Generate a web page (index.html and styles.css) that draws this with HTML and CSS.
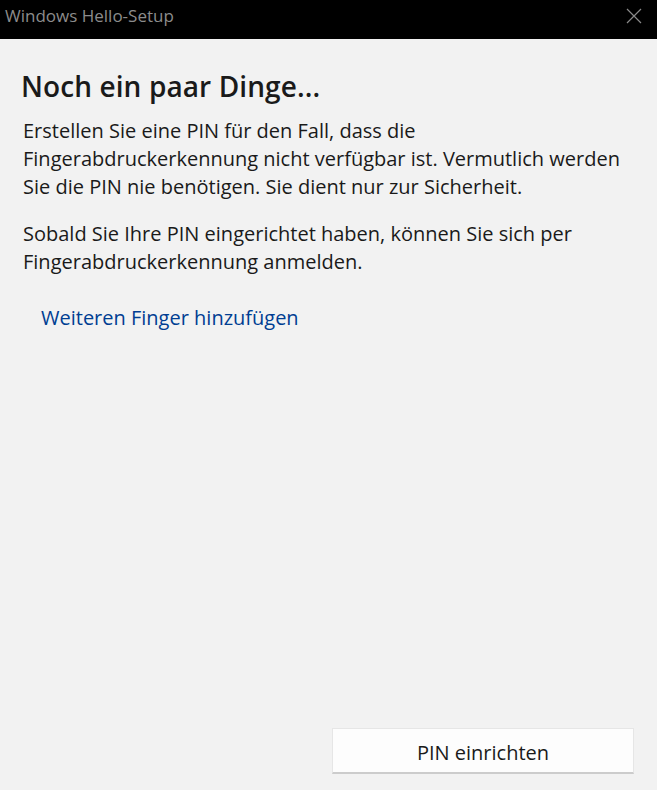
FILE: index.html
```html
<!DOCTYPE html>
<html lang="de">
<head>
    <meta charset="UTF-8">
    <title>Windows Hello-Setup</title>
    <link rel="stylesheet" href="styles.css">
</head>
<body>
    <div class="window">
        <div class="titlebar">
            <span class="title">Windows Hello-Setup</span>
            <svg class="close" width="16" height="16" viewBox="0 0 16 16">
                <path d="M1 1 L15 15 M15 1 L1 15" stroke="#8a8a8a" stroke-width="1.2" fill="none"/>
            </svg>
        </div>
        <div class="content">
            <h1>Noch ein paar Dinge...</h1>
            <p>Erstellen Sie eine PIN für den Fall, dass die Fingerabdruckerkennung nicht verfügbar ist. Vermutlich werden Sie die PIN nie benötigen. Sie dient nur zur Sicherheit.</p>
            <p>Sobald Sie Ihre PIN eingerichtet haben, können Sie sich per Fingerabdruckerkennung anmelden.</p>
            <a class="link" href="#">Weiteren Finger hinzufügen</a>
        </div>
        <div class="footer">
            <button class="btn">PIN einrichten</button>
        </div>
    </div>
</body>
</html>
```

FILE: styles.css
```css
*{
    margin: 0;
    padding: 0;
    box-sizing: border-box;
}

body{
    width: 657px;
    height: 790px;
    background-color: #f2f2f2;
    font-family: "Open Sans", "Noto Sans", sans-serif;
    color: #1a1a1a;
}

.window{
    height: 790px;
    display: flex;
    flex-direction: column;
}

.titlebar{
    height: 39px;
    background-color: #000;
    display: flex;
    align-items: center;
    justify-content: space-between;
    padding: 0 15px 8px 5px;
}

.title{
    color: #8c8c8c;
    font-size: 17px;
}

.content{
    flex: 1;
    padding: 28px 30px 0 23px;
}

h1{
    font-size: 28px;
    font-weight: 600;
    margin-left: -2px;
    margin-bottom: 12px;
    line-height: 38px;
    letter-spacing: 0.1px;
}

p{
    font-size: 20px;
    line-height: 28px;
    margin-bottom: 19px;
}

.link{
    display: inline-block;
    margin-left: 18px;
    margin-top: 9px;
    font-size: 20px;
    color: #003e92;
    text-decoration: none;
}

.footer{
    display: flex;
    justify-content: flex-end;
    padding: 0 23px 16px 0;
}

.btn{
    width: 302px;
    height: 46px;
    padding-top: 3px;
    background-color: #fdfdfd;
    border: 1px solid #e6e6e6;
    border-bottom: 2px solid #cccccc;
    font-family: inherit;
    font-size: 20px;
    color: #1a1a1a;
}
```
